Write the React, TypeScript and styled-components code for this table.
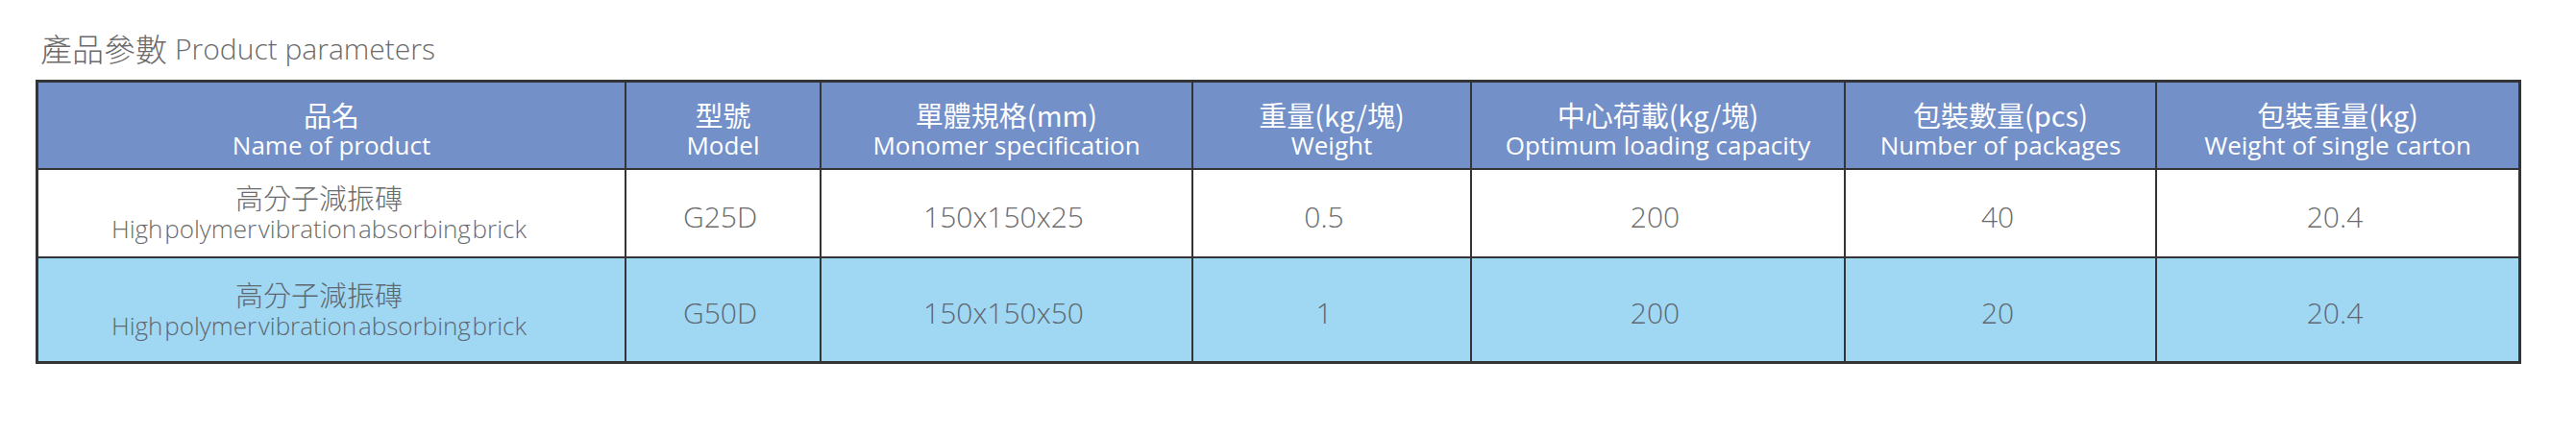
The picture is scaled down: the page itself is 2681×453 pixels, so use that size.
import React from "react";
import styled, { createGlobalStyle } from "styled-components";

const GlobalStyle = createGlobalStyle`
  body {
    margin: 0;
    background: #ffffff;
    font-family: "Open Sans", "Noto Sans CJK TC", sans-serif;
  }
`;

const columns = [
  { cn: "品名", en: "Name of product" },
  { cn: "型號", en: "Model" },
  { cn: "單體規格(mm)", en: "Monomer specification" },
  { cn: "重量(kg/塊)", en: "Weight" },
  { cn: "中心荷載(kg/塊)", en: "Optimum loading capacity" },
  { cn: "包裝數量(pcs)", en: "Number of packages" },
  { cn: "包裝重量(kg)", en: "Weight of single carton" },
];

const rows = [
  { model: "G25D", spec: "150x150x25", weight: "0.5", load: "200", count: "40", carton: "20.4" },
  { model: "G50D", spec: "150x150x50", weight: "1", load: "200", count: "20", carton: "20.4" },
];

const Page = styled.div`
  padding: 30px 0 0 37px;
`;

const Title = styled.h1`
  margin: 0 0 13px 5px;
  height: 40px;
  display: flex;
  align-items: center;
  gap: 8px;
  font-weight: 300;
  color: #6a6a6a;
`;

const TitleCn = styled.span`
  font-family: "Noto Sans CJK TC", sans-serif;
  font-size: 33px;
  font-weight: 300;
`;

const TitleEn = styled.span`
  font-family: "Open Sans", sans-serif;
  font-size: 30px;
  font-weight: 300;
`;

const Grid = styled.div`
  display: grid;
  grid-template-columns: 610px 201px 385px 288px 387px 322px 376px;
  grid-template-rows: 89px 90px 107px;
  gap: 2px;
  padding: 3px;
  width: max-content;
  background: #333436;
`;

const HeadCell = styled.div`
  display: flex;
  flex-direction: column;
  align-items: center;
  justify-content: center;
  padding-top: 8px;
  background: #7390c8;
  color: #ffffff;
  line-height: 32px;
`;

const HeadCn = styled.span`
  font-family: "Noto Sans CJK TC", sans-serif;
  font-size: 29px;
  font-weight: 400;
`;

const HeadEn = styled.span`
  font-family: "Open Sans", sans-serif;
  font-size: 26px;
  font-weight: 400;
`;

const Cell = styled.div<{ $alt: boolean; $shift?: number }>`
  display: flex;
  flex-direction: column;
  align-items: center;
  justify-content: center;
  padding: 6px ${(p) => p.$shift ?? 6}px 0 0;
  background: ${(p) => (p.$alt ? "#a0d8f4" : "#ffffff")};
  color: ${(p) => (p.$alt ? "#5f6770" : "#6b6b6b")};
  font-family: "Open Sans", sans-serif;
  font-size: 30px;
  font-weight: 300;
`;

const NameCell = styled(Cell)`
  padding: 0 26px 0 0;
  line-height: 33px;
`;

const NameCn = styled.span`
  font-family: "Noto Sans CJK TC", sans-serif;
  font-size: 29px;
  font-weight: 300;
`;

const NameEn = styled.span`
  font-family: "Open Sans", sans-serif;
  font-size: 26px;
  font-weight: 300;
  word-spacing: -5px;
`;

export default function App() {
  return (
    <Page>
      <GlobalStyle />
      <Title>
        <TitleCn>產品參數</TitleCn>
        <TitleEn>Product parameters</TitleEn>
      </Title>
      <Grid>
        {columns.map((c) => (
          <HeadCell key={c.en}>
            <HeadCn>{c.cn}</HeadCn>
            <HeadEn>{c.en}</HeadEn>
          </HeadCell>
        ))}
        {rows.map((r, i) => {
          const alt = i % 2 === 1;
          return (
            <React.Fragment key={r.model}>
              <NameCell $alt={alt}>
                <NameCn>高分子減振磚</NameCn>
                <NameEn>High polymer vibration absorbing brick</NameEn>
              </NameCell>
              <Cell $alt={alt}>{r.model}</Cell>
              <Cell $alt={alt}>{r.spec}</Cell>
              <Cell $alt={alt} $shift={16}>{r.weight}</Cell>
              <Cell $alt={alt}>{r.load}</Cell>
              <Cell $alt={alt}>{r.count}</Cell>
              <Cell $alt={alt}>{r.carton}</Cell>
            </React.Fragment>
          );
        })}
      </Grid>
    </Page>
  );
}
